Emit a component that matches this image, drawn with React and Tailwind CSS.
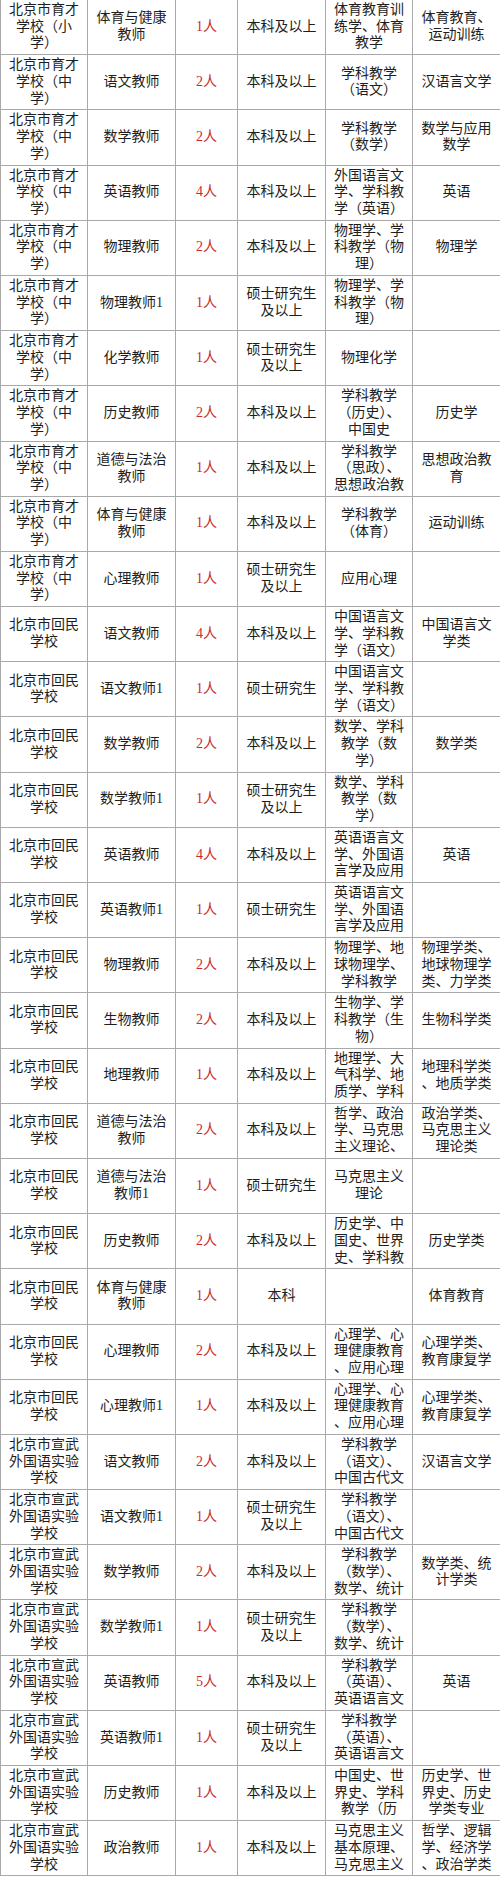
import React from "react";

const S1 = ["北京市育才", "学校（小", "学）"];
const S2 = ["北京市育才", "学校（中", "学）"];
const S3 = ["北京市回民", "学校"];
const S4 = ["北京市宣武", "外国语实验", "学校"];
const B = ["本科及以上"];
const M = ["硕士研究生", "及以上"];
const MS = ["硕士研究生"];

const rows = [
  [S1, ["体育与健康", "教师"], "1人", B, ["体育教育训", "练学、体育", "教学"], ["体育教育、", "运动训练"]],
  [S2, ["语文教师"], "2人", B, ["学科教学", "（语文）"], ["汉语言文学"]],
  [S2, ["数学教师"], "2人", B, ["学科教学", "（数学）"], ["数学与应用", "数学"]],
  [S2, ["英语教师"], "4人", B, ["外国语言文", "学、学科教", "学（英语）"], ["英语"]],
  [S2, ["物理教师"], "2人", B, ["物理学、学", "科教学（物", "理）"], ["物理学"]],
  [S2, ["物理教师1"], "1人", M, ["物理学、学", "科教学（物", "理）"], []],
  [S2, ["化学教师"], "1人", M, ["物理化学"], []],
  [S2, ["历史教师"], "2人", B, ["学科教学", "（历史）、", "中国史"], ["历史学"]],
  [S2, ["道德与法治", "教师"], "1人", B, ["学科教学", "（思政）、", "思想政治教"], ["思想政治教", "育"]],
  [S2, ["体育与健康", "教师"], "1人", B, ["学科教学", "（体育）"], ["运动训练"]],
  [S2, ["心理教师"], "1人", M, ["应用心理"], []],
  [S3, ["语文教师"], "4人", B, ["中国语言文", "学、学科教", "学（语文）"], ["中国语言文", "学类"]],
  [S3, ["语文教师1"], "1人", MS, ["中国语言文", "学、学科教", "学（语文）"], []],
  [S3, ["数学教师"], "2人", B, ["数学、学科", "教学（数", "学）"], ["数学类"]],
  [S3, ["数学教师1"], "1人", M, ["数学、学科", "教学（数", "学）"], []],
  [S3, ["英语教师"], "4人", B, ["英语语言文", "学、外国语", "言学及应用"], ["英语"]],
  [S3, ["英语教师1"], "1人", MS, ["英语语言文", "学、外国语", "言学及应用"], []],
  [S3, ["物理教师"], "2人", B, ["物理学、地", "球物理学、", "学科教学"], ["物理学类、", "地球物理学", "类、力学类"]],
  [S3, ["生物教师"], "2人", B, ["生物学、学", "科教学（生", "物）"], ["生物科学类"]],
  [S3, ["地理教师"], "1人", B, ["地理学、大", "气科学、地", "质学、学科"], ["地理科学类", "、地质学类"]],
  [S3, ["道德与法治", "教师"], "2人", B, ["哲学、政治", "学、马克思", "主义理论、"], ["政治学类、", "马克思主义", "理论类"]],
  [S3, ["道德与法治", "教师1"], "1人", MS, ["马克思主义", "理论"], []],
  [S3, ["历史教师"], "2人", B, ["历史学、中", "国史、世界", "史、学科教"], ["历史学类"]],
  [S3, ["体育与健康", "教师"], "1人", ["本科"], [], ["体育教育"]],
  [S3, ["心理教师"], "2人", B, ["心理学、心", "理健康教育", "、应用心理"], ["心理学类、", "教育康复学"]],
  [S3, ["心理教师1"], "1人", B, ["心理学、心", "理健康教育", "、应用心理"], ["心理学类、", "教育康复学"]],
  [S4, ["语文教师"], "2人", B, ["学科教学", "（语文）、", "中国古代文"], ["汉语言文学"]],
  [S4, ["语文教师1"], "1人", M, ["学科教学", "（语文）、", "中国古代文"], []],
  [S4, ["数学教师"], "2人", B, ["学科教学", "（数学）、", "数学、统计"], ["数学类、统", "计学类"]],
  [S4, ["数学教师1"], "1人", M, ["学科教学", "（数学）、", "数学、统计"], []],
  [S4, ["英语教师"], "5人", B, ["学科教学", "（英语）、", "英语语言文"], ["英语"]],
  [S4, ["英语教师1"], "1人", M, ["学科教学", "（英语）、", "英语语言文"], []],
  [S4, ["历史教师"], "1人", B, ["中国史、世", "界史、学科", "教学（历"], ["历史学、世", "界史、历史", "学类专业"]],
  [S4, ["政治教师"], "1人", B, ["马克思主义", "基本原理、", "马克思主义"], ["哲学、逻辑", "学、经济学", "、政治学类"]],
];

function Cell({ lines, red }) {
  return (
    <div className="h-[55.2px] overflow-hidden border-l border-b border-[#a9a9a9] flex flex-col items-center justify-center text-center">
      {lines.map((l, i) => (
        <div
          key={i}
          className={
            "whitespace-nowrap leading-[16.7px] " +
            (red ? "text-[#cc2a2a]" : "text-[#1e1e1e]")
          }
        >
          {l}
        </div>
      ))}
    </div>
  );
}

export default function App() {
  return (
    <div
      className="w-[500px] bg-white text-[14px] grid grid-cols-[87px_88px_62px_88px_87px_88px]"
      style={{ fontFamily: '"Liberation Serif", "Noto Sans CJK SC", serif' }}
    >
      {rows.map((r, i) => (
        <React.Fragment key={i}>
          <Cell lines={r[0]} />
          <Cell lines={r[1]} />
          <Cell lines={[r[2]]} red />
          <Cell lines={r[3]} />
          <Cell lines={r[4]} />
          <Cell lines={r[5]} />
        </React.Fragment>
      ))}
    </div>
  );
}
